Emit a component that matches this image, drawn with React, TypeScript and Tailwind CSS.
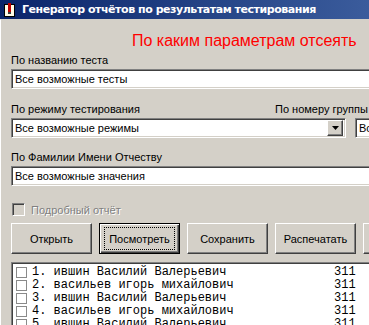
const rows = [
  { n: '1.', name: 'ившин Василий Валерьевич', group: '311' },
  { n: '2.', name: 'васильев игорь михайлович', group: '311' },
  { n: '3.', name: 'ившин Василий Валерьевич', group: '311' },
  { n: '4.', name: 'васильев игорь михайлович', group: '311' },
  { n: '5.', name: 'ившин Василий Валерьевич', group: '311' },
];

const sunken =
  'border border-t-[#808080] border-l-[#808080] border-b-white border-r-white shadow-[inset_1px_1px_0_#404040,inset_-1px_-1px_0_#d4d0c8]';
const raised =
  'border border-t-white border-l-white border-b-[#404040] border-r-[#404040] shadow-[inset_-1px_-1px_0_#808080,inset_1px_1px_0_#d4d0c8]';

function Button({ label, isDefault }: { label: string; isDefault?: boolean }) {
  if (isDefault) {
    return (
      <div className="relative w-[81px] h-[31px] shrink-0 border border-black bg-[#d4d0c8] shadow-[inset_1px_1px_0_#ffffff,inset_-1px_-1px_0_#404040,inset_-2px_-2px_0_#808080] flex items-center justify-center">
        <div className="absolute inset-x-[4px] inset-y-[3px] border border-dotted border-black" />
        <span>{label}</span>
      </div>
    );
  }
  return (
    <div className={`w-[81px] h-[31px] shrink-0 bg-[#d4d0c8] flex items-center justify-center ${raised}`}>
      <span>{label}</span>
    </div>
  );
}

export default function App() {
  return (
    <div className="w-[369px] h-[325px] overflow-hidden bg-[#d4d0c8] text-black text-[11px] leading-[14px] font-['Liberation_Sans',Arial,sans-serif]">
      {/* Title bar */}
      <div className="h-[19px] flex items-center bg-gradient-to-r from-[#0a246a] to-[#3b5c9c]">
        <svg width="11" height="14" viewBox="0 0 11 14" className="ml-[4px] shrink-0">
          <rect x="0.5" y="1.5" width="10" height="12" fill="#fffbe6" stroke="#000" />
          <rect x="4" y="0" width="3" height="9" fill="#c00000" />
          <rect x="4" y="9" width="3" height="2" fill="#404040" />
        </svg>
        <span className="ml-[7px] text-white font-bold text-[11px] whitespace-nowrap font-['DejaVu_Sans',Verdana,sans-serif] tracking-[-0.45px]">
          Генератор отчётов по результатам тестирования
        </span>
      </div>

      <div className="border-t border-t-[#d4d0c8] border-l border-l-white">
        {/* Heading */}
        <div className="h-[33px] pl-[131px] pt-[13px] whitespace-nowrap">
          <span className="text-[#ff0000] text-[16px] leading-[16px]">По каким параметрам отсеять</span>
        </div>

        <div className="pl-[10px]">
          <div className="h-[14px] whitespace-nowrap">По названию теста</div>
          <div className={`mt-[2px] w-[400px] h-[20px] bg-white flex items-center pl-[3px] ${sunken}`}>
            Все возможные тесты
          </div>

          <div className="mt-[13px] h-[14px] flex whitespace-nowrap">
            <span className="w-[264px] shrink-0">По режиму тестирования</span>
            <span>По номеру группы</span>
          </div>
          <div className="mt-[2px] flex">
            <div className={`w-[335px] h-[20px] bg-white flex items-center pl-[3px] pr-[2px] shrink-0 ${sunken}`}>
              <span className="flex-1">Все возможные режимы</span>
              <div className={`w-[16px] h-[16px] bg-[#d4d0c8] flex items-center justify-center ${raised}`}>
                <svg width="7" height="4" viewBox="0 0 7 4">
                  <path d="M0 0h7L3.5 4z" fill="#000" />
                </svg>
              </div>
            </div>
            <div className={`ml-[9px] w-[80px] h-[20px] bg-white flex items-center pl-[3px] shrink-0 whitespace-nowrap overflow-hidden ${sunken}`}>
              Все
            </div>
          </div>

          <div className="mt-[12px] h-[14px] whitespace-nowrap">По Фамилии Имени Отчеству</div>
          <div className={`mt-[2px] w-[400px] h-[20px] bg-white flex items-center pl-[3px] ${sunken}`}>
            Все возможные значения
          </div>

          <div className="mt-[17px] h-[13px] flex items-center">
            <div className={`ml-[1px] w-[13px] h-[13px] bg-[#d4d0c8] ${sunken}`} />
            <span className="ml-[6px] text-[#808080] [text-shadow:1px_1px_0_#ffffff]">Подробный отчёт</span>
          </div>

          <div className="mt-[7px] flex gap-[7px]">
            <Button label="Открыть" />
            <Button label="Посмотреть" isDefault />
            <Button label="Сохранить" />
            <Button label="Распечатать" />
            <Button label="" />
          </div>

          <div className={`mt-[8px] w-[400px] h-[80px] bg-white pt-[3px] pl-[2px] ${sunken}`}>
            {rows.map((r, i) => (
              <div key={i} className="h-[13px] flex items-center whitespace-nowrap font-['Liberation_Mono','Courier_New',monospace] text-[12px] leading-[13px]">
                <div className="ml-[2px] w-[11px] h-[11px] border border-[#8a8a8a] bg-white shrink-0" />
                <span className="ml-[5px] w-[302px] shrink-0">
                  {r.n} {r.name}
                </span>
                <span>{r.group}</span>
              </div>
            ))}
          </div>
        </div>
      </div>
    </div>
  );
}
